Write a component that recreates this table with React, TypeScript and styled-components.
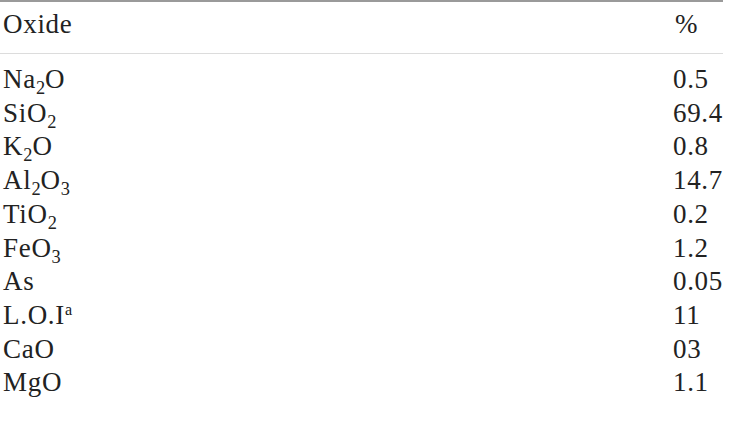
import React from "react";
import styled, { createGlobalStyle } from "styled-components";

const Global = createGlobalStyle`
  html, body { margin: 0; padding: 0; background: #ffffff; }
  body { font-family: "Liberation Serif", "Times New Roman", serif; }
`;

const Table = styled.table`
  width: 723px;
  border-collapse: collapse;
  font-family: "Liberation Serif", "Times New Roman", serif;
  font-size: 27px;
  letter-spacing: 0.7px;
  color: #222222;
`;

const HeadRow = styled.tr`
  border-top: 2px solid #9a9a9a;
  border-bottom: 1px solid #dcdcdc;
`;

const HeadCell = styled.th<{ $value?: boolean }>`
  font-weight: normal;
  text-align: left;
  line-height: 34px;
  padding: 5px 0 12px ${(p) => (p.$value ? "2px" : "3px")};
  width: ${(p) => (p.$value ? "48px" : "auto")};
`;

const BodyCell = styled.td<{ $value?: boolean; $first?: boolean }>`
  line-height: 33.7px;
  padding: ${(p) => (p.$first ? "9px" : "0")} 0 0 ${(p) => (p.$value ? "0" : "3px")};
  width: ${(p) => (p.$value ? "48px" : "auto")};
  white-space: nowrap;
`;

const Sub = styled.sub`
  font-size: 0.68em;
  line-height: 0;
  vertical-align: -0.3em;
  letter-spacing: 0;
`;

const Sup = styled.sup`
  font-size: 0.6em;
  line-height: 0;
  vertical-align: 0.55em;
  letter-spacing: 0;
`;

type Row = { oxide: React.ReactNode; value: string };

const rows: Row[] = [
  { oxide: <>Na<Sub>2</Sub>O</>, value: "0.5" },
  { oxide: <>SiO<Sub>2</Sub></>, value: "69.4" },
  { oxide: <>K<Sub>2</Sub>O</>, value: "0.8" },
  { oxide: <>Al<Sub>2</Sub>O<Sub>3</Sub></>, value: "14.7" },
  { oxide: <>TiO<Sub>2</Sub></>, value: "0.2" },
  { oxide: <>FeO<Sub>3</Sub></>, value: "1.2" },
  { oxide: <>As</>, value: "0.05" },
  { oxide: <>L.O.I<Sup>a</Sup></>, value: "11" },
  { oxide: <>CaO</>, value: "03" },
  { oxide: <>MgO</>, value: "1.1" },
];

export default function App() {
  return (
    <>
      <Global />
      <Table>
        <thead>
          <HeadRow>
            <HeadCell>Oxide</HeadCell>
            <HeadCell $value>%</HeadCell>
          </HeadRow>
        </thead>
        <tbody>
          {rows.map((r, i) => (
            <tr key={i}>
              <BodyCell $first={i === 0}>{r.oxide}</BodyCell>
              <BodyCell $value $first={i === 0}>{r.value}</BodyCell>
            </tr>
          ))}
        </tbody>
      </Table>
    </>
  );
}
